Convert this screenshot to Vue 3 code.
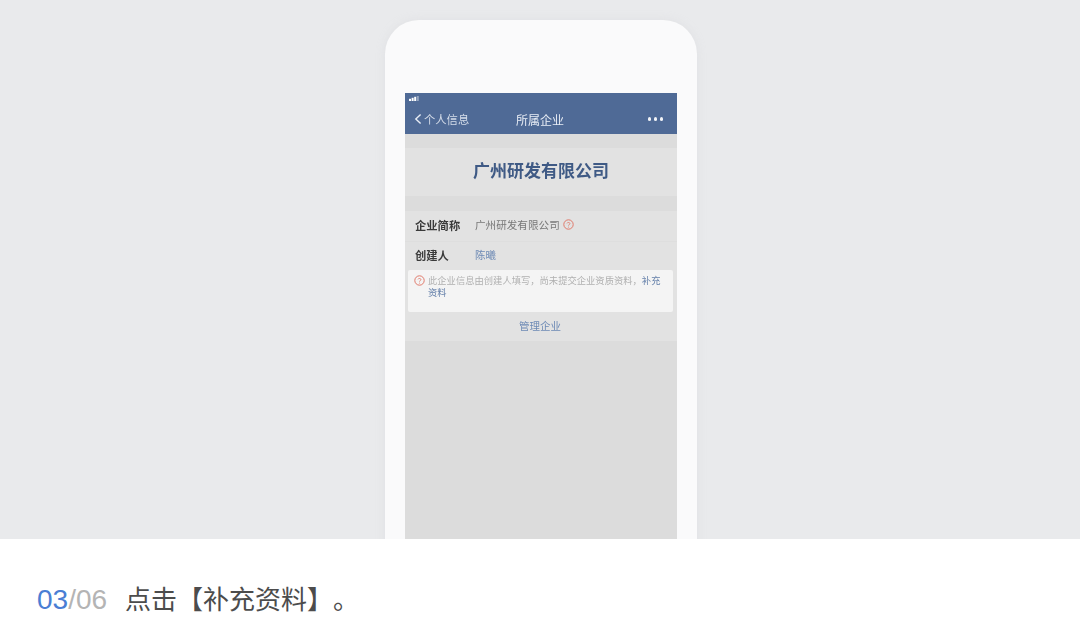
<script setup>
const stepNow = '03'
const stepAll = '06'
</script>

<template>
  <div class="page">
    <section class="stage">
      <div class="phone">
        <div class="screen">
          <header class="head">
            <div class="status">
              <svg class="signal" width="11" height="5" viewBox="0 0 11 5">
                <rect x="0" y="2.8" width="2" height="2.2" fill="#fff" />
                <rect x="2.6" y="1.8" width="2" height="3.2" fill="#fff" />
                <rect x="5.2" y=".8" width="2" height="4.2" fill="#fff" />
                <rect x="7.8" y="0" width="2" height="5" fill="#fff" opacity=".4" />
              </svg>
            </div>
            <div class="nav">
              <div class="back">
                <svg width="8" height="12" viewBox="0 0 8 12">
                  <path d="M6.6 1.4 1.8 6l4.8 4.6" fill="none" stroke="#e8edf5" stroke-width="1.4" />
                </svg>
                <span>个人信息</span>
              </div>
              <div class="nav-title">所属企业</div>
              <div class="dots"><i></i><i></i><i></i></div>
            </div>
          </header>

          <div class="company">广州研发有限公司</div>

          <div class="info">
            <div class="row">
              <span class="label">企业简称</span>
              <span class="value">广州研发有限公司</span>
              <svg class="q q-inline" width="11" height="11" viewBox="0 0 11 11">
                <circle cx="5.5" cy="5.5" r="4.7" fill="none" stroke="#e0796a" stroke-width="1" />
                <path d="M4 4.3c.2-1 2.9-1.2 2.9.3 0 1-1.3 1-1.4 2M5.5 7.7v.8" fill="none" stroke="#e0796a" stroke-width=".9" />
              </svg>
            </div>
            <div class="row row-second">
              <span class="label">创建人</span>
              <span class="value link">陈曦</span>
            </div>
            <div class="notice">
              <svg class="q" width="11" height="11" viewBox="0 0 11 11">
                <circle cx="5.5" cy="5.5" r="4.7" fill="none" stroke="#e0796a" stroke-width="1" />
                <path d="M4 4.3c.2-1 2.9-1.2 2.9.3 0 1-1.3 1-1.4 2M5.5 7.7v.8" fill="none" stroke="#e0796a" stroke-width=".9" />
              </svg>
              <p>此企业信息由创建人填写，尚未提交企业资质资料，<b>补充</b><b>资料</b></p>
            </div>
            <div class="manage">管理企业</div>
          </div>
        </div>
      </div>
    </section>

    <footer class="caption">
      <span class="num"><em>{{ stepNow }}</em><span class="slash">/</span>{{ stepAll }}</span>
      <span class="desc">点击【补充资料】。</span>
    </footer>
  </div>
</template>

<style scoped>
.page {
  width: 1080px;
  height: 622px;
  overflow: hidden;
  background: #fff;
  font-family: "Liberation Sans", "Noto Sans CJK SC", sans-serif;
}
.stage {
  height: 539px;
  padding-top: 20px;
  box-sizing: border-box;
  overflow: hidden;
  display: flex;
  justify-content: center;
  background: #e9eaec;
}
.phone {
  width: 312px;
  height: 600px;
  margin-left: 2px;
  padding: 73px 20px 0;
  box-sizing: border-box;
  border-radius: 34px 34px 0 0;
  background: #fafafb;
  box-shadow: 0 0 8px rgba(205, 207, 212, .35);
}
.screen {
  height: 527px;
  background: #dcdcdc;
  filter: blur(.4px);
}
.head {
  height: 41px;
  background: #4f6a96;
  color: #e8edf5;
}
.status {
  height: 12px;
  padding: 3px 0 0 4px;
  box-sizing: border-box;
}
.signal { display: block; }
.nav {
  height: 29px;
  padding: 0 14px 1px 9px;
  box-sizing: border-box;
  display: grid;
  grid-template-columns: 1fr auto 1fr;
  align-items: center;
}
.back {
  display: flex;
  align-items: center;
  gap: 2px;
  font-size: 11.3px;
  color: #d5dde9;
}
.nav-title {
  margin-left: 3px;
  font-size: 12px;
}
.dots {
  justify-self: end;
  display: flex;
  gap: 2.5px;
}
.dots i {
  width: 3.5px;
  height: 3.5px;
  border-radius: 50%;
  background: #f2f4f8;
}
.company {
  margin-top: 14px;
  height: 48px;
  line-height: 48px;
  text-align: center;
  font-size: 17px;
  font-weight: 700;
  color: #3f5a85;
  background: #e2e2e2;
}
.info {
  margin-top: 15px;
  background: #e2e2e2;
}
.row {
  height: 30px;
  padding: 0 0 3px 10px;
  display: flex;
  align-items: center;
  box-sizing: border-box;
}
.row-second {
  height: 29px;
  border-top: 1px solid #dedede;
}
.label {
  width: 60px;
  font-size: 11.3px;
  font-weight: 700;
  color: #3a3a3a;
}
.value {
  font-size: 10.6px;
  color: #787878;
}
.value.link {
  font-size: 10.5px;
  color: #6d8ab5;
}
.q { flex: none; display: block; }
.q-inline { margin-left: 3px; }
.notice {
  height: 42px;
  box-sizing: border-box;
  margin: 0 4px 0 3px;
  padding: 5px 11px 0 6px;
  display: flex;
  gap: 3px;
  background: #f4f4f4;
  border-radius: 2px;
}
.notice p {
  margin: 0;
  font-size: 9.3px;
  line-height: 12px;
  color: #b0b0b0;
  text-spacing-trim: space-all;
}
.notice b {
  font-weight: 400;
  color: #6580aa;
}
.manage {
  height: 29px;
  line-height: 29px;
  padding-right: 2px;
  text-align: center;
  font-size: 10.5px;
  color: #6d8ab5;
}
.caption {
  height: 83px;
  padding: 39px 0 0 37px;
  display: flex;
  align-items: center;
  box-sizing: border-box;
  line-height: 44px;
}
.num {
  font-family: "Liberation Sans", sans-serif;
  font-size: 28px;
  color: #b4b4b4;
}
.num em {
  font-style: normal;
  color: #4a7ed4;
}
.desc {
  margin-left: 18px;
  font-size: 26px;
  color: #4c4c4c;
  text-spacing-trim: space-all;
}
</style>
